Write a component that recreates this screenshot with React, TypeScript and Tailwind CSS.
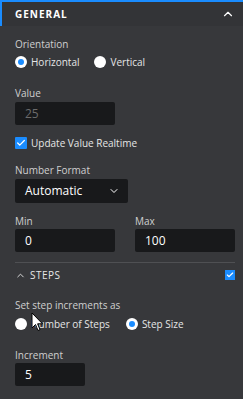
import { ChevronUp, ChevronDown, Check } from 'lucide-react';

const Radio = ({ checked, label }: { checked?: boolean; label: string }) => (
  <label className="flex items-center gap-[4px] h-[12px]">
    <span className="w-[12px] h-[12px] rounded-full bg-white flex items-center justify-center">
      {checked && <span className="w-[6px] h-[6px] rounded-full bg-[#1a8cff]" />}
    </span>
    <span className="text-[10px] leading-[12px] text-[#e6e6e6]">{label}</span>
  </label>
);

const Field = ({ value, muted, width }: { value: string; muted?: boolean; width: string }) => (
  <div className={`${width} h-[23px] bg-[#18191b] rounded-[2px] flex items-center px-[10px] text-[12px] ${muted ? 'text-[#6b6b6b]' : 'text-white'}`}>
    {value}
  </div>
);

const Label = ({ children }: { children: React.ReactNode }) => (
  <div className="text-[10px] text-[#cfcfcf] leading-[14px] h-[14px]">{children}</div>
);

export default function App() {
  return (
    <div className="relative w-[243px] h-[399px] bg-[#37383b] border-t-2 border-[#1a8cff] overflow-hidden" style={{ fontFamily: '"Open Sans", sans-serif' }}>
      <div className="flex items-center justify-between h-[24px] bg-[#333437] border-l-2 border-[#1a8cff] pl-[13px] pr-[8px]">
        <span className="text-[10px] leading-[14px] font-bold tracking-[1px] text-white">GENERAL</span>
        <ChevronUp className="w-[14px] h-[14px] text-white" strokeWidth={2} />
      </div>

      <div className="pl-[15px] pr-[8px] pt-[11px]">
        <Label>Orientation</Label>
        <div className="flex items-center gap-[15px] mt-[5px]">
          <Radio checked label="Horizontal" />
          <Radio label="Vertical" />
        </div>

        <div className="mt-[18px]">
          <Label>Value</Label>
        </div>
        <div className="mt-[2px]">
          <Field value="25" muted width="w-[100px]" />
        </div>

        <div className="flex items-center gap-[4px] mt-[12px] h-[12px]">
          <span className="w-[12px] h-[12px] bg-[#1a8cff] rounded-[1px] flex items-center justify-center">
            <Check className="w-[10px] h-[10px] text-white" strokeWidth={3} />
          </span>
          <span className="text-[10px] leading-[12px] text-[#e6e6e6]">Update Value Realtime</span>
        </div>

        <div className="mt-[14px]">
          <Label>Number Format</Label>
        </div>
        <div className="mt-[2px] w-[113px] h-[24px] bg-[#18191b] rounded-[2px] flex items-center justify-between pl-[10px] pr-[8px]">
          <span className="text-[12px] leading-[16px] text-white">Automatic</span>
          <ChevronDown className="w-[12px] h-[12px] text-white" strokeWidth={2} />
        </div>

        <div className="grid grid-cols-[100px_100px] gap-[20px] mt-[11px]">
          <div>
            <Label>Min</Label>
            <div className="mt-[1px]">
              <Field value="0" width="w-full" />
            </div>
          </div>
          <div>
            <Label>Max</Label>
            <div className="mt-[1px]">
              <Field value="100" width="w-full" />
            </div>
          </div>
        </div>

        <div className="h-px bg-[#4f5053] mt-[10px]" />

        <div className="flex items-center justify-between mt-[6px] h-[12px]">
          <div className="flex items-center gap-[4px]">
            <ChevronUp className="w-[11px] h-[11px] text-[#e6e6e6]" strokeWidth={2} />
            <span className="text-[10px] leading-[12px] text-[#e6e6e6] tracking-[0.5px]">STEPS</span>
          </div>
          <span className="w-[10px] h-[10px] bg-[#1a8cff] flex items-center justify-center">
            <Check className="w-[8px] h-[8px] text-white" strokeWidth={3.5} />
          </span>
        </div>

        <div className="mt-[17px]">
          <Label>Set step increments as</Label>
        </div>
        <div className="flex items-center gap-[16px] mt-[6px]">
          <Radio label="Number of Steps" />
          <Radio checked label="Step Size" />
        </div>

        <div className="mt-[18px]">
          <Label>Increment</Label>
        </div>
        <div className="mt-[1px]">
          <Field value="5" width="w-[70px]" />
        </div>
      </div>

      <svg className="absolute left-[31px] top-[310px]" width="13" height="20" viewBox="0 0 13 20">
        <path d="M1 1 L1 16 L4.5 12.5 L7 18.5 L9 17.6 L6.6 11.8 L11.5 11.8 Z" fill="white" stroke="black" strokeWidth="1" strokeLinejoin="round" />
      </svg>
    </div>
  );
}
